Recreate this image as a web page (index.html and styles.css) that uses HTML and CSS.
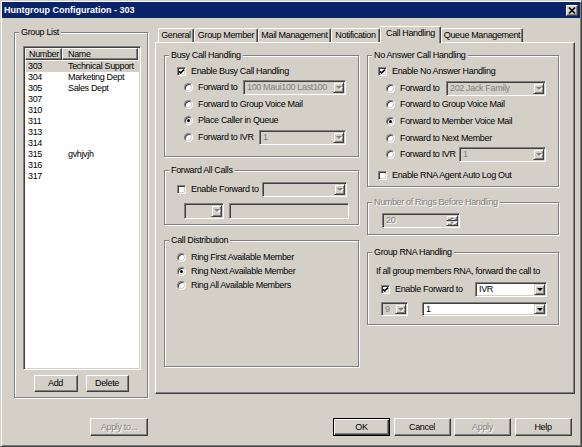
FILE: index.html
```html
<!DOCTYPE html>
<html>
<head>
<meta charset="utf-8">
<title>Huntgroup Configuration - 303</title>
<link rel="stylesheet" href="styles.css">
</head>
<body>
<div class="window">
  <div class="titlebar">
    <span class="title-text">Huntgroup Configuration - 303</span>
    <span class="close-btn"><svg width="8" height="7" viewBox="0 0 8 7"><path d="M1 0.5 L7 6.5 M7 0.5 L1 6.5" stroke="#000" stroke-width="1.5" fill="none"/></svg></span>
  </div>

  <div class="main">
    <div class="group group-list">
      <div class="gtitle">Group List</div>
      <div class="listview">
        <div class="lv-header">
          <div class="lv-h lv-h-num">Number</div>
          <div class="lv-h lv-h-name">Name</div>
        </div>
        <div class="lv-rows">
          <div class="lv-row selected"><span class="lv-num">303</span><span>Technical Support</span></div>
          <div class="lv-row"><span class="lv-num">304</span><span>Marketing Dept</span></div>
          <div class="lv-row"><span class="lv-num">305</span><span>Sales Dept</span></div>
          <div class="lv-row"><span class="lv-num">307</span></div>
          <div class="lv-row"><span class="lv-num">310</span></div>
          <div class="lv-row"><span class="lv-num">311</span></div>
          <div class="lv-row"><span class="lv-num">313</span></div>
          <div class="lv-row"><span class="lv-num">314</span></div>
          <div class="lv-row"><span class="lv-num">315</span><span>gvhjvjh</span></div>
          <div class="lv-row"><span class="lv-num">316</span></div>
          <div class="lv-row"><span class="lv-num">317</span></div>
        </div>
      </div>
      <div class="list-buttons">
        <button class="btn btn-add">Add</button>
        <button class="btn btn-del">Delete</button>
      </div>
    </div>

    <div class="tabctl">
      <div class="tabs">
        <div class="tab t-general">General</div>
        <div class="tab t-member">Group Member</div>
        <div class="tab t-mail">Mail Management</div>
        <div class="tab t-notif">Notification</div>
        <div class="tab t-call active">Call Handling</div>
        <div class="tab t-queue">Queue Management</div>
      </div>
      <div class="panel">
        <div class="cols">
          <div class="col col-left">
            <div class="group g-busy">
              <div class="gtitle">Busy Call Handling</div>
              <div class="rows">
                <div class="row"><span class="cb"><svg width="7" height="7" viewBox="0 0 7 7"><polyline points="1,3.2 2.7,4.9 6,1.6" fill="none" stroke="#000" stroke-width="1.5"/></svg></span><span>Enable Busy Call Handling</span></div>
                <div class="row ind"><span class="rb"></span><span>Forward to</span><span class="combo dis w103"><span class="val">100 Maui100 Last100</span><span class="arrow"></span></span></div>
                <div class="row ind"><span class="rb"></span><span>Forward to Group Voice Mail</span></div>
                <div class="row ind"><span class="rb on"></span><span>Place Caller in Queue</span></div>
                <div class="row ind"><span class="rb"></span><span>Forward to IVR</span><span class="combo dis w87"><span class="val">1</span><span class="arrow"></span></span></div>
              </div>
            </div>

            <div class="group g-fwdall">
              <div class="gtitle">Forward All Calls</div>
              <div class="rows">
                <div class="row"><span class="cb"></span><span>Enable Forward to</span><span class="combo dis w85"><span class="val"></span><span class="arrow"></span></span></div>
                <div class="row row2">
                  <span class="combo dis w40 h16"><span class="val"></span><span class="arrow"></span></span>
                  <span class="field w120"></span>
                </div>
              </div>
            </div>

            <div class="group g-dist">
              <div class="gtitle">Call Distribution</div>
              <div class="rows">
                <div class="row r14"><span class="rb"></span><span>Ring First Available Member</span></div>
                <div class="row r14"><span class="rb on"></span><span>Ring Next Available Member</span></div>
                <div class="row r14"><span class="rb"></span><span>Ring All Available Members</span></div>
              </div>
            </div>
          </div>

          <div class="col col-right">
            <div class="group g-noans">
              <div class="gtitle">No Answer Call Handling</div>
              <div class="rows">
                <div class="row"><span class="cb"><svg width="7" height="7" viewBox="0 0 7 7"><polyline points="1,3.2 2.7,4.9 6,1.6" fill="none" stroke="#000" stroke-width="1.5"/></svg></span><span>Enable No Answer Handling</span></div>
                <div class="row ind"><span class="rb"></span><span>Forward to</span><span class="combo dis w100"><span class="val">202 Jack Family</span><span class="arrow"></span></span></div>
                <div class="row ind"><span class="rb"></span><span>Forward to Group Voice Mail</span></div>
                <div class="row ind"><span class="rb on"></span><span>Forward to Member Voice Mail</span></div>
                <div class="row ind"><span class="rb"></span><span>Forward to Next Member</span></div>
                <div class="row ind"><span class="rb"></span><span>Forward to IVR</span><span class="combo dis w87"><span class="val">1</span><span class="arrow"></span></span></div>
                <div class="row rna-log"><span class="cb"></span><span>Enable RNA Agent Auto Log Out</span></div>
              </div>
            </div>

            <div class="group g-rings">
              <div class="gtitle dis-text">Number of Rings Before Handling</div>
              <div class="spin">
                <span class="val dis-text">20</span>
                <span class="spin-btns"><span class="sb up"></span><span class="sb down"></span></span>
              </div>
            </div>

            <div class="group g-rna">
              <div class="gtitle">Group RNA Handling</div>
              <div class="rna-text">If all group members RNA, forward the call to</div>
              <div class="row rna-row"><span class="cb"><svg width="7" height="7" viewBox="0 0 7 7"><polyline points="1,3.2 2.7,4.9 6,1.6" fill="none" stroke="#000" stroke-width="1.5"/></svg></span><span>Enable Forward to</span><span class="combo w72"><span class="val">IVR</span><span class="arrow"></span></span></div>
              <div class="row rna-row2">
                <span class="combo dis w27 h14"><span class="val">9</span><span class="arrow"></span></span>
                <span class="combo w125 h14 gap14"><span class="val">1</span><span class="arrow"></span></span>
              </div>
            </div>
          </div>
        </div>
      </div>
    </div>
  </div>

  <div class="footer">
    <button class="btn btn-applyto disabled">Apply to...</button>
    <div class="footer-right">
      <button class="btn fbtn btn-default">OK</button>
      <button class="btn fbtn">Cancel</button>
      <button class="btn fbtn disabled">Apply</button>
      <button class="btn fbtn">Help</button>
    </div>
  </div>
</div>
</body>
</html>
```
FILE: styles.css
```css
* { box-sizing: border-box; }
html, body { margin: 0; padding: 0; }
body {
  font-family: "Liberation Sans", Arial, sans-serif;
  font-size: 9px;
  letter-spacing: -0.35px;
  line-height: 11px;
  color: #000;
  background: #d4d0c8;
}

.window {
  width: 582px;
  height: 447px;
  background: #d4d0c8;
  border: 1px solid;
  border-color: #d4d0c8 #404040 #404040 #d4d0c8;
  box-shadow: inset 1px 1px #fff, inset -1px -1px #808080;
  padding: 1px;
  overflow: hidden;
}

/* title bar */
.titlebar {
  height: 16px;
  background: #0a246a;
  color: #fff;
  font-weight: bold;
  letter-spacing: 0;
  display: flex;
  align-items: center;
  padding: 0 2px;
}
.title-text { flex: 1; white-space: nowrap; }
.close-btn {
  width: 12px;
  height: 11px;
  background: #d4d0c8;
  border: 1px solid;
  border-color: #fff #404040 #404040 #fff;
  box-shadow: inset -1px -1px #808080;
  display: flex;
  align-items: center;
  justify-content: center;
}
.close-btn svg { display: block; }

/* layout */
.main {
  display: flex;
  align-items: flex-start;
  padding-left: 12px;
}

/* group boxes */
.group {
  border: 1px solid #808080;
  box-shadow: 1px 1px 0 #fff, inset 1px 1px 0 #fff;
}
.gtitle {
  width: max-content;
  height: 11px;
  margin: -6px 0 0 4px;
  padding: 0 2px;
  background: #d4d0c8;
  white-space: nowrap;
}

/* group list */
.group-list {
  width: 134px;
  height: 366px;
  margin-top: 14px;
  display: flex;
  flex-direction: column;
}
.listview {
  margin: 8px 0 0 8px;
  width: 118px;
  height: 324px;
  background: #fff;
  border: 1px solid;
  border-color: #808080 #fff #fff #808080;
  box-shadow: inset 1px 1px #404040, inset -1px -1px #d4d0c8;
  padding: 1px;
}
.lv-header { display: flex; height: 12px; }
.lv-h {
  background: #d4d0c8;
  border: 1px solid;
  border-color: #fff #404040 #404040 #fff;
  box-shadow: inset -1px -1px #808080;
  line-height: 10px;
  white-space: nowrap;
}
.lv-h-num { width: 37px; padding-left: 3px; }
.lv-h-name { width: 76px; padding-left: 5px; }
.lv-rows { padding-top: 1px; }
.lv-row {
  display: flex;
  height: 11px;
  margin-left: 1px;
  padding-left: 2px;
  white-space: nowrap;
}
.lv-row.selected { background: #d4d0c8; }
.lv-num { width: 40px; }

.list-buttons {
  display: flex;
  justify-content: center;
  gap: 8px;
  margin-top: 5px;
}

/* buttons */
.btn {
  appearance: none;
  margin: 0;
  padding: 0;
  font: inherit;
  letter-spacing: inherit;
  line-height: 11px;
  color: #000;
  background: #d4d0c8;
  border: 1px solid;
  border-color: #fff #404040 #404040 #fff;
  box-shadow: inset -1px -1px #808080;
  display: flex;
  align-items: center;
  justify-content: center;
}
.btn-add { width: 44px; height: 17px; }
.btn-del { width: 43px; height: 17px; }
.btn.disabled { color: #808080; text-shadow: 1px 1px 0 #fff; }
.btn-default {
  border-color: #000;
  box-shadow: inset 1px 1px #fff, inset -1px -1px #404040, inset -2px -2px #808080;
}

/* tab control */
.tabctl {
  width: 420px;
  margin-left: 7px;
  margin-top: 8px;
}
.tabs {
  display: flex;
  align-items: flex-end;
  height: 16px;
  padding-left: 3px;
  position: relative;
  z-index: 1;
}
.tab {
  height: 14px;
  background: #d4d0c8;
  border: 1px solid;
  border-bottom: none;
  border-color: #fff #404040 transparent #fff;
  border-radius: 2px 2px 0 0;
  box-shadow: inset -1px 0 #808080;
  text-align: center;
  line-height: 12px;
  white-space: nowrap;
}
.tab.active { height: 17px; margin-bottom: -1px; line-height: 13px; }
.t-general { width: 36px; }
.t-member { width: 64px; }
.t-mail { width: 73px; }
.t-notif { width: 49px; }
.t-call { width: 61px; }
.t-queue { width: 82px; }

.panel {
  height: 352px;
  border: 1px solid;
  border-color: #fff #404040 #404040 #fff;
  box-shadow: inset -1px -1px #808080;
  padding: 12px 0 0 8px;
}
.cols { display: flex; gap: 8px; }
.col { display: flex; flex-direction: column; }
.col-left { width: 195px; }
.col-right { width: 192px; }

.g-busy { height: 102px; }
.g-fwdall { height: 55px; margin-top: 13px; }
.g-dist { height: 127px; margin-top: 15px; }
.g-noans { height: 132px; }
.g-rings { height: 33px; margin-top: 15px; }
.g-rna { height: 73px; margin-top: 17px; }

/* rows */
.row {
  display: flex;
  align-items: center;
  height: 16.67px;
  white-space: nowrap;
}
.g-busy .rows { margin-top: 1.7px; padding: 0 12px 0 12px; }
.g-busy .ind { padding-left: 7px; }
.g-fwdall .rows { margin-top: 5.3px; padding: 0 11px 0 12px; }
.g-fwdall .row2 { height: 16px; margin-top: 4.7px; padding-left: 7px; }
.g-dist .rows { margin-top: 4px; padding-left: 12px; }
.row.r14 { height: 14px; }
.g-noans .rows { margin-top: 2.2px; padding: 0 12px 0 10px; }
.g-noans .ind { padding-left: 8px; }
.g-noans .rna-log { margin-top: 4px; }

.rna-text { margin: 7.5px 0 0 8px; white-space: nowrap; }
.rna-row { margin-top: 4.5px; height: 17px; padding: 0 11px 0 13px; }
.rna-row2 { margin-top: 4px; height: 14px; padding-left: 13px; }

/* checkbox / radio */
.cb {
  flex: none;
  width: 9px;
  height: 9px;
  margin-right: 5px;
  background: #fff;
  border: 1px solid;
  border-color: #808080 #fff #fff #808080;
  box-shadow: inset 1px 1px #404040, inset -1px -1px #d4d0c8;
}
.cb svg { display: block; }
.rb {
  flex: none;
  width: 9px;
  height: 9px;
  margin-right: 5px;
  border-radius: 50%;
  background: #fff;
  border: 1px solid;
  border-color: #808080 #fff #fff #808080;
  box-shadow: inset 1px 1px #404040, inset -1px -1px #d4d0c8;
  display: flex;
  align-items: center;
  justify-content: center;
}
.rb.on::after {
  content: "";
  width: 3px;
  height: 3px;
  border-radius: 50%;
  background: #000;
}

/* combo box */
.combo {
  flex: none;
  margin-left: auto;
  display: flex;
  align-items: stretch;
  height: 15px;
  padding: 1px;
  background: #fff;
  border: 1px solid;
  border-color: #808080 #fff #fff #808080;
  box-shadow: inset 1px 1px #404040, inset -1px -1px #d4d0c8;
}
.combo .val {
  flex: 1;
  padding-left: 2px;
  overflow: hidden;
  white-space: nowrap;
  line-height: 11px;
}
.combo .arrow {
  width: 11px;
  background: #d4d0c8;
  border: 1px solid;
  border-color: #d4d0c8 #404040 #404040 #d4d0c8;
  box-shadow: inset 1px 1px #fff, inset -1px -1px #808080;
  display: flex;
  align-items: center;
  justify-content: center;
}
.combo .arrow::before {
  content: "";
  border-left: 3px solid transparent;
  border-right: 3px solid transparent;
  border-top: 3px solid #000;
}
.combo.dis { background: #d4d0c8; color: #808080; }
.combo.dis .arrow::before { border-top-color: #808080; filter: drop-shadow(1px 1px 0 #fff); }
.row2 .combo, .rna-row2 .combo { margin-left: 0; }
.combo.h16 { height: 16px; }
.combo.h14 { height: 14px; }
.combo.gap14 { margin-left: 14px; }
.w27 { width: 27px; }
.w40 { width: 40px; }
.w72 { width: 72px; }
.w85 { width: 85px; }
.w87 { width: 87px; }
.w100 { width: 100px; }
.w103 { width: 103px; }
.w120 { width: 120px; }
.w125 { width: 125px; }

.field {
  flex: none;
  height: 16px;
  margin-left: 5px;
  background: #d4d0c8;
  border: 1px solid;
  border-color: #808080 #fff #fff #808080;
  box-shadow: inset 1px 1px #404040, inset -1px -1px #d4d0c8;
}

/* spin */
.spin {
  display: flex;
  width: 78px;
  height: 15px;
  margin: 5px 0 0 14px;
  padding: 1px;
  background: #d4d0c8;
  border: 1px solid;
  border-color: #808080 #fff #fff #808080;
  box-shadow: inset 1px 1px #404040, inset -1px -1px #d4d0c8;
}
.spin .val { flex: 1; padding-left: 2px; line-height: 11px; }
.spin-btns { width: 12px; display: flex; flex-direction: column; }
.sb {
  flex: 1;
  background: #d4d0c8;
  border: 1px solid;
  border-color: #d4d0c8 #404040 #404040 #d4d0c8;
  box-shadow: inset 1px 1px #fff, inset -1px -1px #808080;
  display: flex;
  align-items: center;
  justify-content: center;
}
.sb::before {
  content: "";
  border-left: 2px solid transparent;
  border-right: 2px solid transparent;
  filter: drop-shadow(1px 1px 0 #fff);
}
.sb.up::before { border-bottom: 2px solid #808080; }
.sb.down::before { border-top: 2px solid #808080; }

.dis-text { color: #808080; text-shadow: 1px 1px 0 #fff; }

/* footer */
.footer {
  display: flex;
  margin-top: 20px;
  padding: 0 8.5px 0 88px;
}
.btn-applyto { width: 58px; height: 18px; }
.footer-right { margin-left: auto; display: flex; gap: 3.5px; }
.fbtn { width: 57px; height: 18px; }
```
